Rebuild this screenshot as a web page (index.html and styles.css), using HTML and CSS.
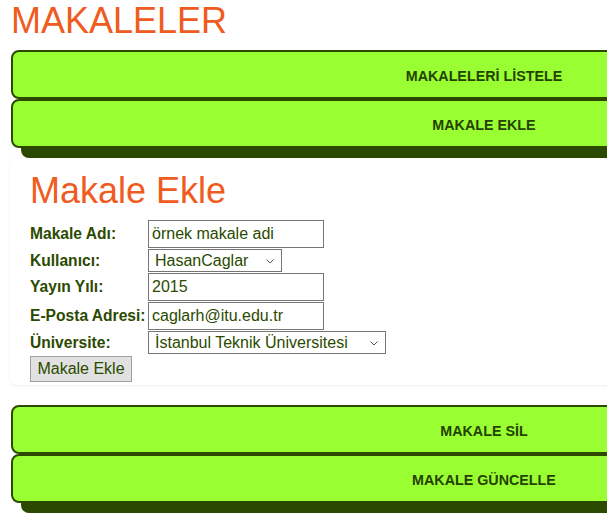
FILE: index.html
```html
<!DOCTYPE html>
<html lang="tr">
<head>
<meta charset="utf-8">
<title>Makaleler</title>
<link rel="stylesheet" href="styles.css">
</head>
<body>
<div class="page">
  <h1 class="title">MAKALELER</h1>
  <div class="bars">
    <a class="bar">MAKALELERİ LİSTELE</a>
    <a class="bar">MAKALE EKLE</a>
  </div>
  <section class="panel">
    <h2 class="panel-title">Makale Ekle</h2>
    <form class="form">
      <label class="lbl">Makale Adı:</label>
      <input class="field" type="text" value="örnek makale adi">
      <label class="lbl">Kullanıcı:</label>
      <span class="select-wrap">
        <select class="choice choice-user"><option>HasanCaglar</option></select>
        <svg class="chev" width="8" height="5" viewBox="0 0 8 5"><path d="M0.5 0.5 L4 4 L7.5 0.5" fill="none" stroke="#555" stroke-width="1"/></svg>
      </span>
      <label class="lbl">Yayın Yılı:</label>
      <input class="field" type="text" value="2015">
      <label class="lbl">E-Posta Adresi:</label>
      <input class="field" type="text" value="caglarh@itu.edu.tr">
      <label class="lbl">Üniversite:</label>
      <span class="select-wrap">
        <select class="choice choice-uni"><option>İstanbul Teknik Üniversitesi</option></select>
        <svg class="chev" width="8" height="5" viewBox="0 0 8 5"><path d="M0.5 0.5 L4 4 L7.5 0.5" fill="none" stroke="#555" stroke-width="1"/></svg>
      </span>
      <button class="submit" type="button">Makale Ekle</button>
    </form>
  </section>
  <div class="bars bars-bottom">
    <a class="bar">MAKALE SİL</a>
    <a class="bar">MAKALE GÜNCELLE</a>
  </div>
</div>
</body>
</html>
```
FILE: styles.css
```css
html {
  overflow: hidden;
}
body {
  margin: 0;
  padding: 0;
  background: #ffffff;
  font-family: "Liberation Sans", Arial, sans-serif;
  color: #2b4a00;
}
.page {
  padding-left: 11px;
  padding-bottom: 20px;
  width: 960px;
}
.title {
  margin: 0 0 9px 0;
  font-size: 36px;
  font-weight: normal;
  line-height: 41px;
  color: #ef5b20;
}
.bars {
  display: flex;
  flex-direction: column;
  width: 946px;
}
.bar {
  display: flex;
  align-items: center;
  justify-content: center;
  box-sizing: border-box;
  height: 49px;
  padding-top: 3px;
  border: 2px solid #2b4a00;
  border-radius: 8px;
  background: #99ff33;
  box-shadow: 10px 10px 0 #2b4a00;
  font-weight: bold;
  font-size: 14.3px;
  color: #264200;
}
.panel {
  margin: 11px 0 0 -1px;
  padding: 11px 0 3px 20px;
  width: 927px;
  border-radius: 6px;
  box-shadow: 0 1px 3px rgba(0, 0, 0, 0.08);
}
.panel-title {
  margin: 0 0 9px 0;
  font-size: 36px;
  font-weight: normal;
  line-height: 41px;
  color: #ef5b20;
}
.form {
  display: grid;
  grid-template-columns: 118px auto;
  row-gap: 1px;
  justify-items: start;
  align-items: center;
}
.lbl {
  font-weight: bold;
  font-size: 15.6px;
  white-space: nowrap;
  color: #2b4a00;
}
.field {
  box-sizing: border-box;
  width: 176px;
  height: 28px;
  margin: 0;
  padding: 0 3px;
  border: 1px solid #767676;
  font-family: "Liberation Sans", Arial, sans-serif;
  font-size: 16px;
  color: #2b4a00;
  background: #ffffff;
}
.select-wrap {
  position: relative;
  display: block;
  height: 23px;
}
.choice {
  display: block;
  box-sizing: border-box;
  height: 23px;
  margin: 0;
  padding: 0 0 0 6px;
  border: 1px solid #767676;
  border-radius: 0;
  -webkit-appearance: none;
  appearance: none;
  font-family: "Liberation Sans", Arial, sans-serif;
  font-size: 16px;
  color: #2b4a00;
  background-color: #ffffff;
}
.chev {
  position: absolute;
  right: 8px;
  top: 10px;
  pointer-events: none;
}
.choice-user { width: 134px; }
.choice-uni { width: 238px; }
.submit {
  grid-column: 1 / 2;
  margin-top: 1px;
  box-sizing: border-box;
  height: 26px;
  width: 102px;
  padding: 0;
  border: 1px solid #a0a0a0;
  background: #e1e1e1;
  font-family: "Liberation Sans", Arial, sans-serif;
  font-size: 16px;
  color: #2b4a00;
}
.bars-bottom {
  margin-top: 20px;
}
```
